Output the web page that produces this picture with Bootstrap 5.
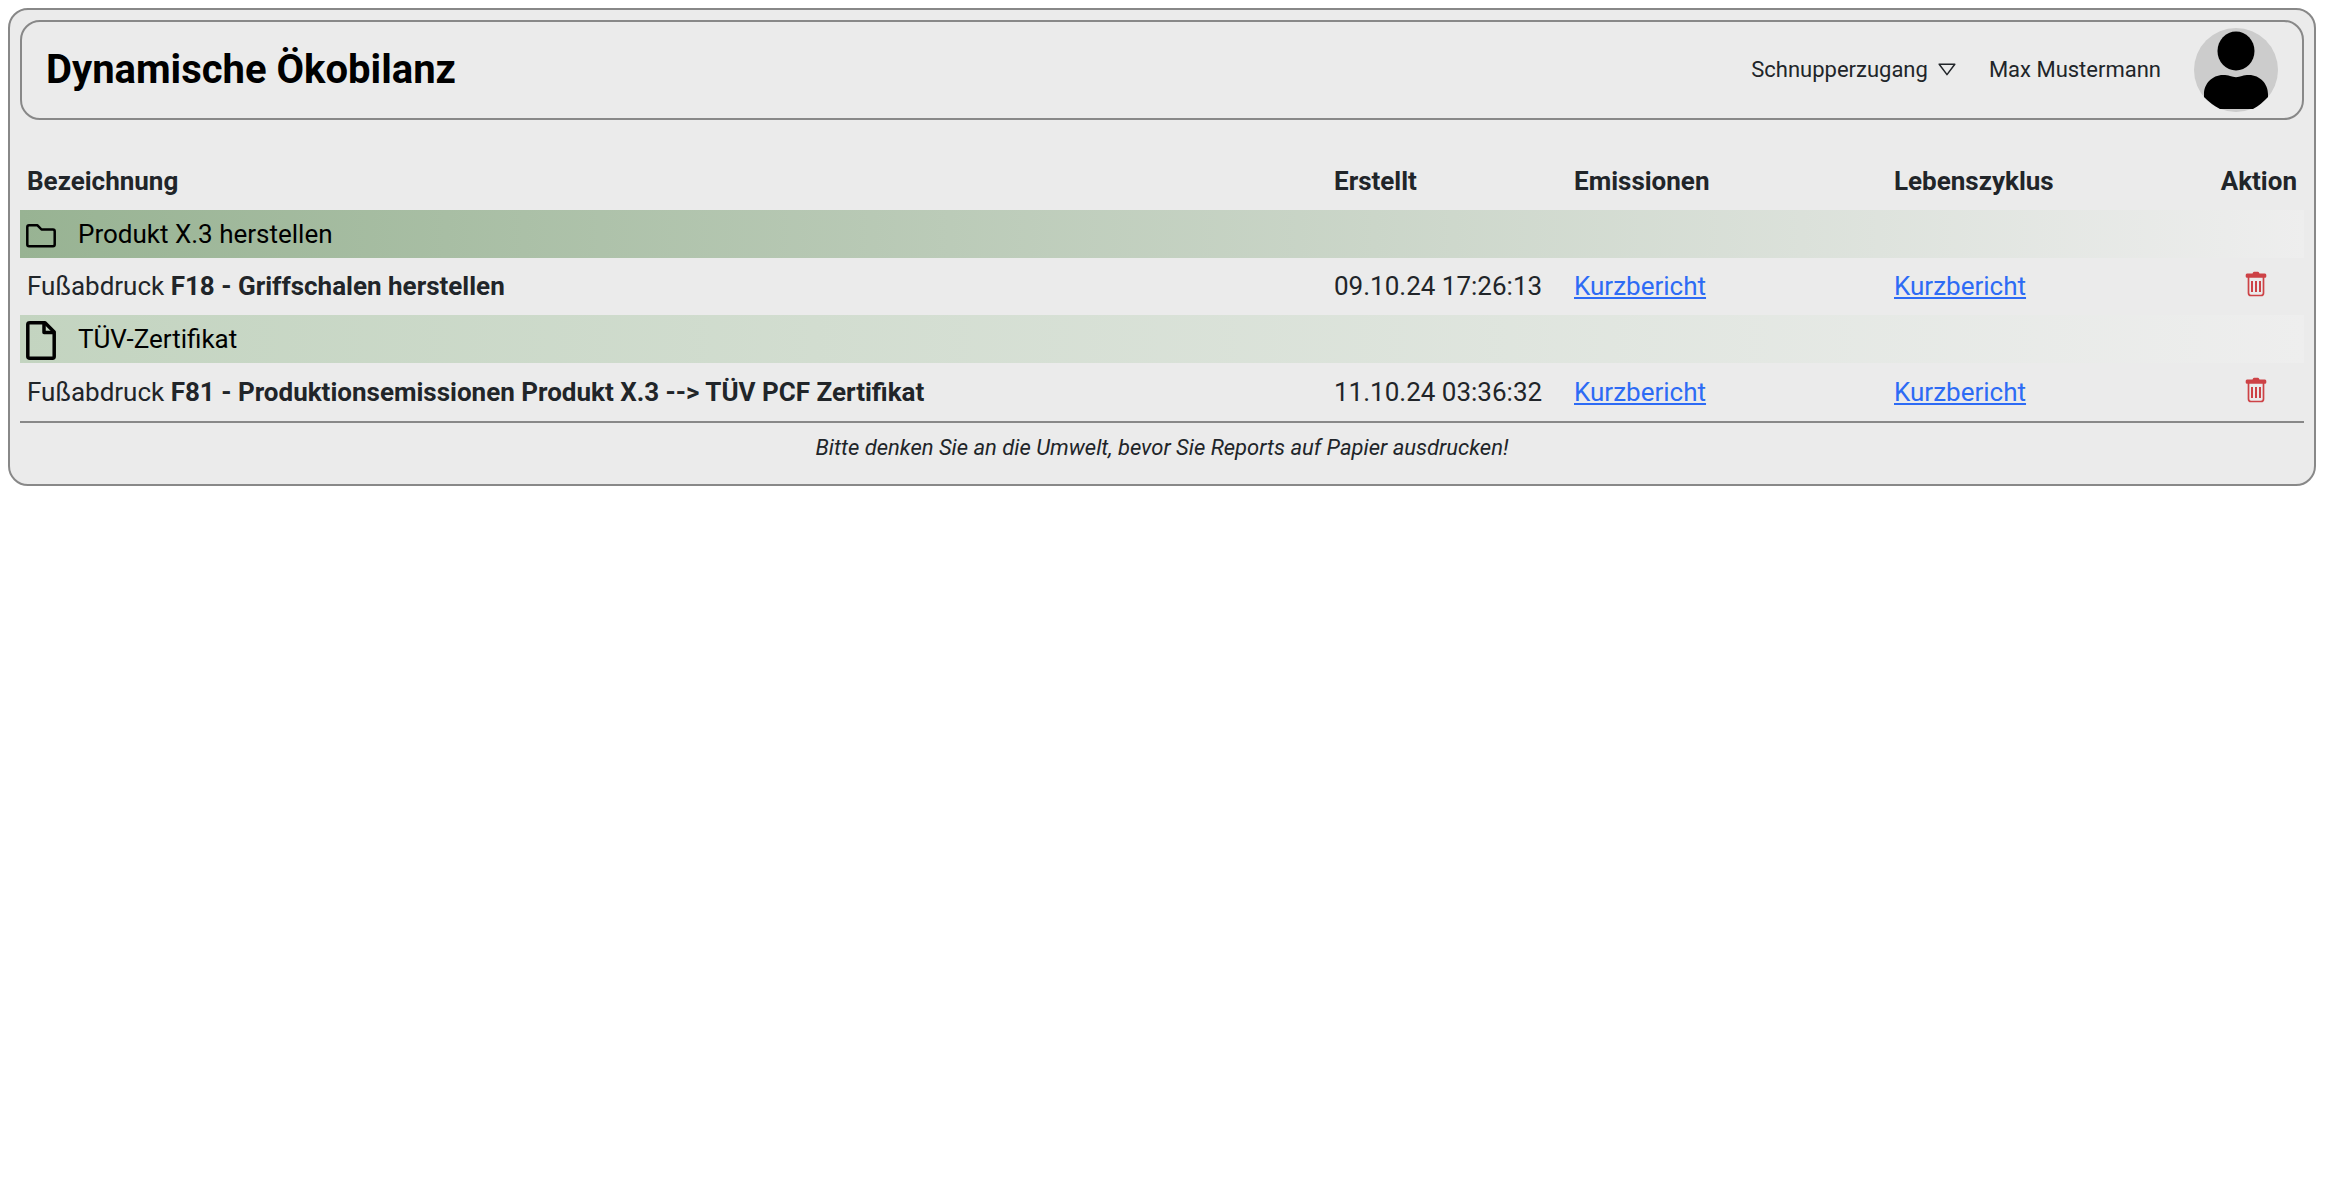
<!DOCTYPE html>
<html lang="de">
<head>
<meta charset="utf-8">
<meta name="viewport" content="width=device-width, initial-scale=1">
<title>Dynamische Ökobilanz</title>
<link href="https://cdn.jsdelivr.net/npm/bootstrap@5.3.0/dist/css/bootstrap.min.css" rel="stylesheet">
<style>
  body { font-family: Roboto, "Liberation Sans", sans-serif; font-size: 26px; color: #212529; background: #fff; }
  .panel { margin: 8px 10px 8px 8px; padding: 10px; border: 2px solid #888; border-radius: 20px; background: #ebebeb; }
  .topbar { height: 100px; padding: 0 24px; border: 2px solid #888; border-radius: 20px; font-size: 22px; gap: 33px; }
  .topbar h1 { font-size: 40px; font-weight: 700; color: #000; }
  .plan-btn { font-size: 22px; color: #212529; line-height: 32px; gap: 10px; }
  .user-name { line-height: 32px; }
  .avatar { width: 84px; height: 84px; }
  .reports { table-layout: fixed; margin-top: 36px; border-bottom: 2px solid #888; }
  .reports > * > tr > * { padding: 7px; border: 0; line-height: 42px; background: transparent; vertical-align: top; }
  .reports > thead > tr > * { padding: 4px 7px 8px; }
  .reports > tbody > tr.entry > * { padding-bottom: 8px; }
  .reports > tbody > tr.entry:last-child > * { padding-top: 8px; }
  .reports > tbody > tr.group > th { padding: 3px 6px; font-weight: 400; color: #000; }
  .reports > tbody > tr.group-product { background: linear-gradient(90deg, #98b393, #eee); }
  .reports > tbody > tr.group-cert { background: linear-gradient(90deg, #c3d4c0, #eee); }
  .col-date { width: 240px; }
  .col-emission { width: 320px; }
  .col-cycle { width: 326px; }
  .col-action { width: 91px; }
  .group-icon { width: 30px; height: 42px; margin-right: 22px; }
  .reports a { color: #2d6bf5; }
  .reports > tbody > tr.entry > .action-cell { padding-right: 12px; }
  .del-btn { width: 34px; height: 38px; color: #cd4246; }
  .hint { font-size: 22px; line-height: 32px; padding: 9px 0 10px; font-style: italic; }
</style>
</head>
<body>
<main class="panel">
  <header class="topbar d-flex align-items-center">
    <h1 class="mb-0 me-auto">Dynamische Ökobilanz</h1>
    <button type="button" class="plan-btn btn p-0 border-0 d-flex align-items-center">
      Schnupperzugang
      <svg width="18" height="15" viewBox="0 0 18 15" fill="none" stroke="currentColor" stroke-width="1.5" stroke-linejoin="round" aria-hidden="true"><path d="M1.2 1.2h15.6L9 11.600z"/></svg>
    </button>
    <span class="user-name">Max Mustermann</span>
    <svg class="avatar" viewBox="0 0 84 84" role="img" aria-label="Profilbild">
      <circle cx="42" cy="42" r="42" fill="#ccc"/>
      <ellipse cx="42" cy="23" rx="18.500" ry="19.500"/>
      <path d="M10 69v-3c0-10 8-19 19-19 3 0 5 0 7 1 4 1.500 8 1.500 12 0 2-1 4-1 7-1 11 0 19 9 19 19v3c-5 5-9 9-15 12H26C20 78 15 74 10 69z"/>
    </svg>
  </header>

  <table class="reports table mb-0">
    <colgroup><col><col class="col-date"><col class="col-emission"><col class="col-cycle"><col class="col-action"></colgroup>
    <thead>
      <tr><th scope="col">Bezeichnung</th><th scope="col">Erstellt</th><th scope="col">Emissionen</th><th scope="col">Lebenszyklus</th><th scope="col" class="text-end">Aktion</th></tr>
    </thead>
    <tbody>
      <tr class="group group-product">
        <th colspan="5" scope="colgroup">
          <div class="d-flex align-items-center">
            <svg class="group-icon" viewBox="0 0 30 42" fill="none" stroke="currentColor" stroke-width="2.500" stroke-linejoin="round" aria-hidden="true"><path d="M3 12.300h8.500l4 4.200h11.500q1.700 0 1.700 1.700v13.300q0 1.700-1.700 1.700H3q-1.700 0-1.700-1.700V14q0-1.700 1.700-1.700z"/></svg>
            Produkt X.3 herstellen
          </div>
        </th>
      </tr>
      <tr class="entry">
        <td>Fußabdruck <b>F18 - Griffschalen herstellen</b></td>
        <td>09.10.24 17:26:13</td>
        <td><a href="#">Kurzbericht</a></td>
        <td><a href="#">Kurzbericht</a></td>
        <td class="action-cell text-center"><button type="button" class="del-btn btn p-0 border-0 d-inline-flex align-items-center justify-content-center align-top" aria-label="Löschen"><svg width="22" height="26" viewBox="0 0 22 26" fill="none" stroke="currentColor" aria-hidden="true"><path d="M2 2.500h5.500Q8 .8 9 .8h4q1 0 1.500 1.700H20q1.300 0 1.300 1.500v1.500q0 1.300-1.300 1.300H2Q.7 6.800.7 5.500V4Q.7 2.500 2 2.500z" fill="currentColor" stroke="none"/><path d="M3.500 6v16q0 2.500 2.500 2.500h10q2.500 0 2.500-2.500V6" stroke-width="1.700"/><path d="M7 10v11M11 10v11M15 10v11" stroke-width="2"/></svg></button></td>
      </tr>
      <tr class="group group-cert">
        <th colspan="5" scope="colgroup">
          <div class="d-flex align-items-center">
            <svg class="group-icon" viewBox="0 0 30 42" fill="none" stroke="currentColor" stroke-width="3.500" stroke-linejoin="round" aria-hidden="true"><path d="M4 4.800h15L28.200 14v24.500q0 1.700-1.700 1.700H4q-2.200 0-2.200-1.700V6.500Q1.800 4.800 4 4.800z"/><path d="M18 5v9.500h10"/></svg>
            TÜV-Zertifikat
          </div>
        </th>
      </tr>
      <tr class="entry">
        <td>Fußabdruck <b>F81 - Produktionsemissionen Produkt X.3 --&gt; TÜV PCF Zertifikat</b></td>
        <td>11.10.24 03:36:32</td>
        <td><a href="#">Kurzbericht</a></td>
        <td><a href="#">Kurzbericht</a></td>
        <td class="action-cell text-center"><button type="button" class="del-btn btn p-0 border-0 d-inline-flex align-items-center justify-content-center align-top" aria-label="Löschen"><svg width="22" height="26" viewBox="0 0 22 26" fill="none" stroke="currentColor" aria-hidden="true"><path d="M2 2.500h5.500Q8 .8 9 .8h4q1 0 1.500 1.700H20q1.300 0 1.300 1.500v1.500q0 1.300-1.300 1.300H2Q.7 6.800.7 5.500V4Q.7 2.500 2 2.500z" fill="currentColor" stroke="none"/><path d="M3.500 6v16q0 2.500 2.500 2.500h10q2.500 0 2.500-2.500V6" stroke-width="1.700"/><path d="M7 10v11M11 10v11M15 10v11" stroke-width="2"/></svg></button></td>
      </tr>
    </tbody>
  </table>
  <p class="hint text-center mb-0">Bitte denken Sie an die Umwelt, bevor Sie Reports auf Papier ausdrucken!</p>
</main>
<script src="https://cdn.jsdelivr.net/npm/bootstrap@5.3.0/dist/js/bootstrap.bundle.min.js"></script>
</body>
</html>
